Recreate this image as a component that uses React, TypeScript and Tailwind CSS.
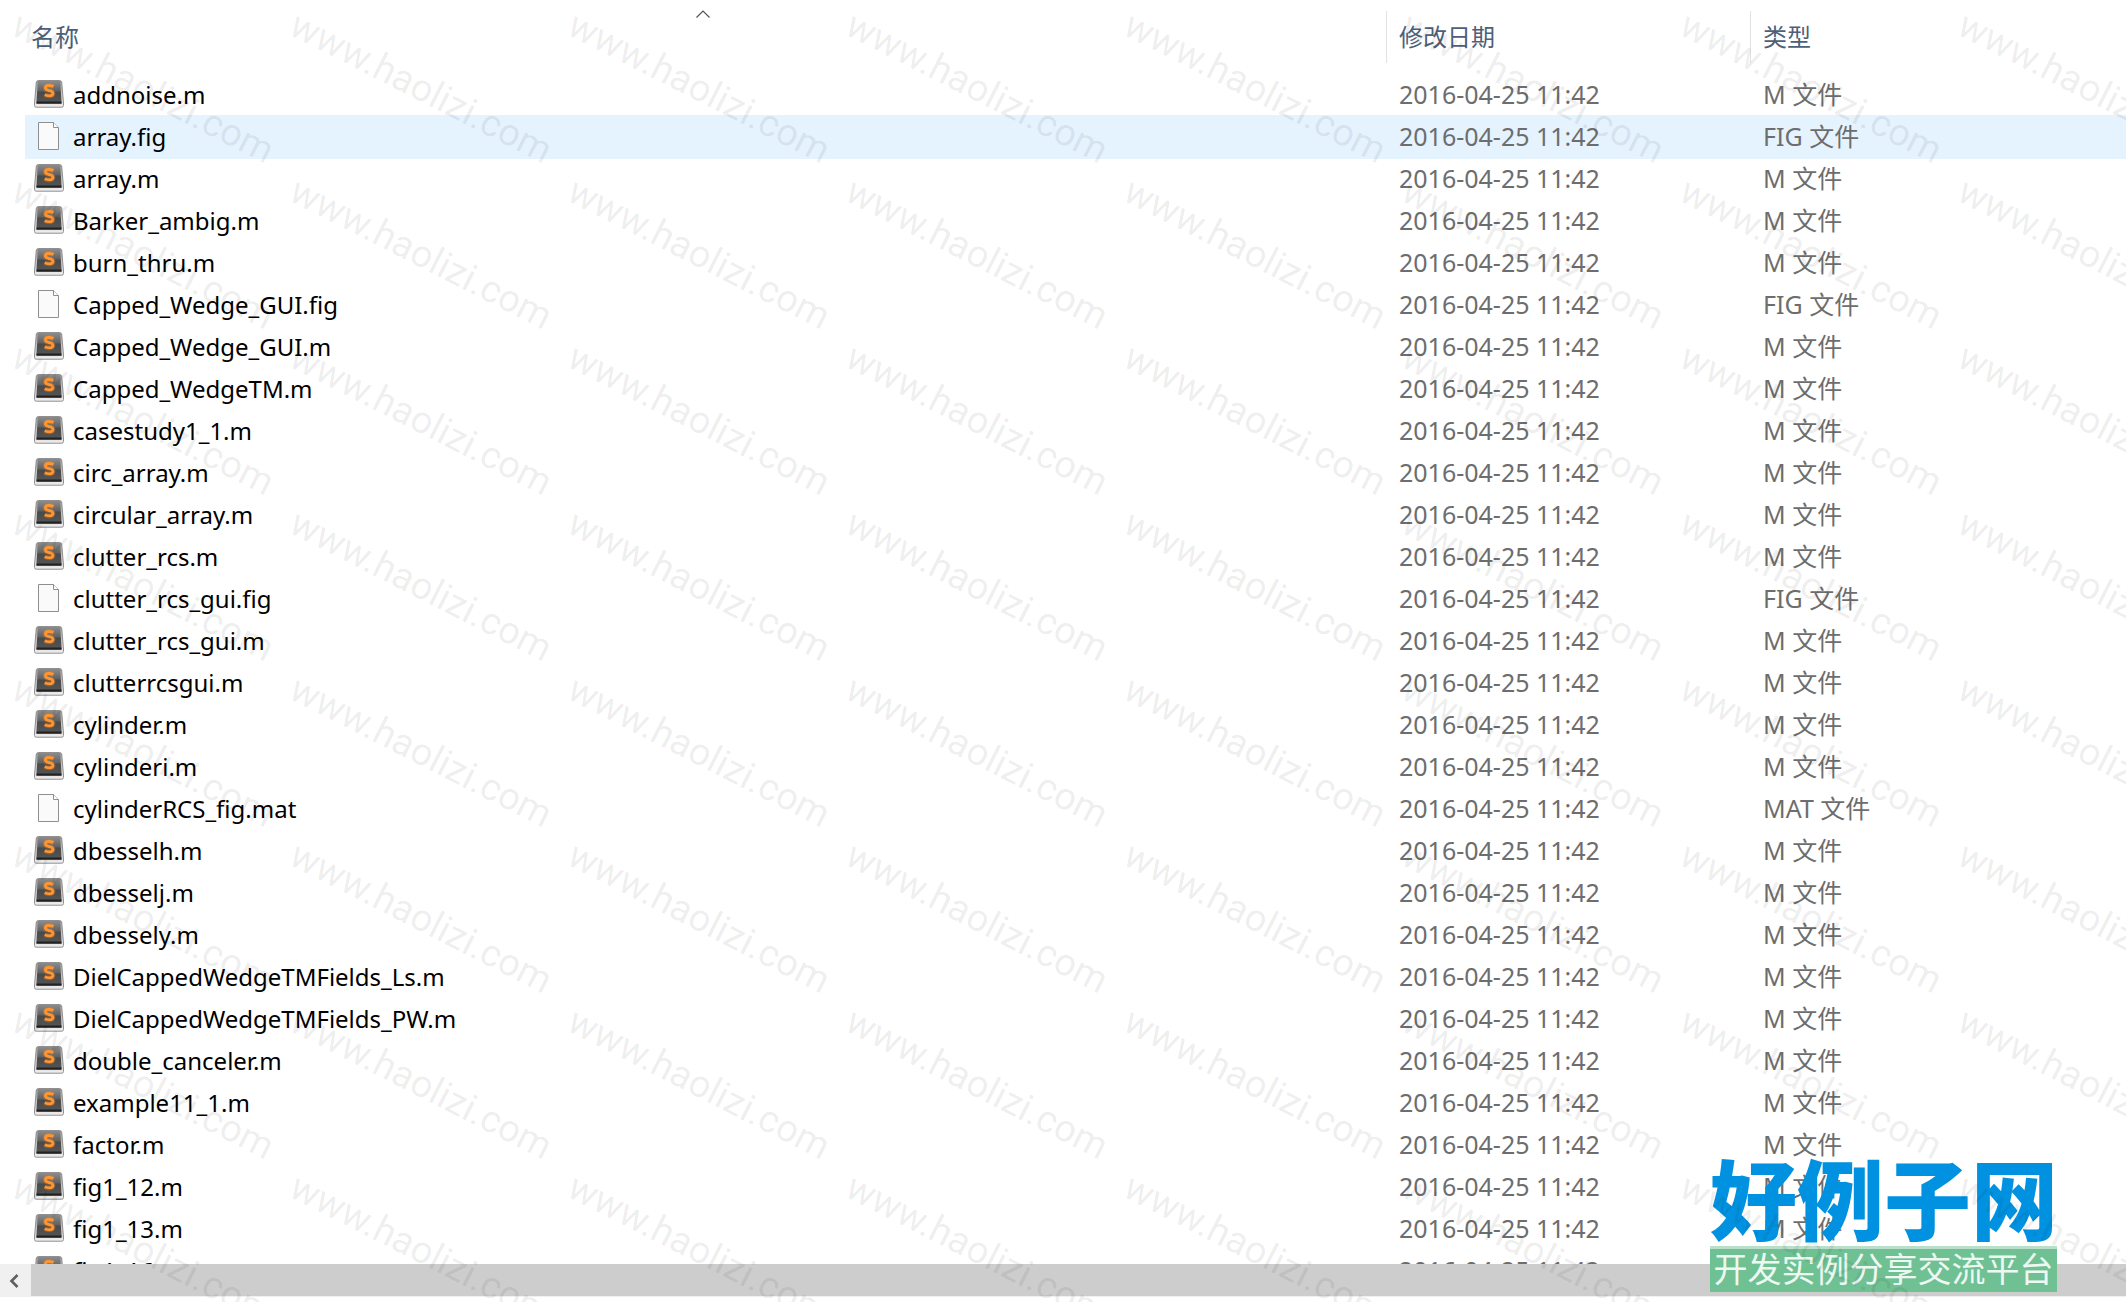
import * as React from "react";

interface FileEntry {
  name: string;
  type: string;
  selected?: boolean;
}

const MODIFIED = "2016-04-25 11:42";

const files: FileEntry[] = [
  { name: "addnoise.m", type: "M 文件" },
  { name: "array.fig", type: "FIG 文件", selected: true },
  { name: "array.m", type: "M 文件" },
  { name: "Barker_ambig.m", type: "M 文件" },
  { name: "burn_thru.m", type: "M 文件" },
  { name: "Capped_Wedge_GUI.fig", type: "FIG 文件" },
  { name: "Capped_Wedge_GUI.m", type: "M 文件" },
  { name: "Capped_WedgeTM.m", type: "M 文件" },
  { name: "casestudy1_1.m", type: "M 文件" },
  { name: "circ_array.m", type: "M 文件" },
  { name: "circular_array.m", type: "M 文件" },
  { name: "clutter_rcs.m", type: "M 文件" },
  { name: "clutter_rcs_gui.fig", type: "FIG 文件" },
  { name: "clutter_rcs_gui.m", type: "M 文件" },
  { name: "clutterrcsgui.m", type: "M 文件" },
  { name: "cylinder.m", type: "M 文件" },
  { name: "cylinderi.m", type: "M 文件" },
  { name: "cylinderRCS_fig.mat", type: "MAT 文件" },
  { name: "dbesselh.m", type: "M 文件" },
  { name: "dbesselj.m", type: "M 文件" },
  { name: "dbessely.m", type: "M 文件" },
  { name: "DielCappedWedgeTMFields_Ls.m", type: "M 文件" },
  { name: "DielCappedWedgeTMFields_PW.m", type: "M 文件" },
  { name: "double_canceler.m", type: "M 文件" },
  { name: "example11_1.m", type: "M 文件" },
  { name: "factor.m", type: "M 文件" },
  { name: "fig1_12.m", type: "M 文件" },
  { name: "fig1_13.m", type: "M 文件" },
  { name: "fig1_16.m", type: "M 文件" },
];

function SublimeIcon() {
  return (
    <svg viewBox="0 0 30 28" className="w-[30px] h-7 shrink-0" aria-hidden="true">
      <defs>
        <linearGradient id="key" x1="0" y1="0" x2="0" y2="1">
          <stop offset="0" stopColor="#8e8e8e" />
          <stop offset="0.45" stopColor="#606060" />
          <stop offset="0.5" stopColor="#4a4a4a" />
          <stop offset="1" stopColor="#555555" />
        </linearGradient>
        <linearGradient id="frame" x1="0" y1="0" x2="0" y2="1">
          <stop offset="0" stopColor="#9a9a9a" />
          <stop offset="1" stopColor="#f0f0f0" />
        </linearGradient>
      </defs>
      <path d="M4.500 .5h21q1.800 0 2.200 1.800L29.500 23v2.500q0 1.700-1.700 1.700H2.200Q.5 27.200.5 25.500V23L2.300 2.300Q2.700 .5 4.500 .5z" fill="url(#frame)" stroke="#909090" />
      <path d="M5.500 .5h19q1.500 0 1.700 1.500L27.500 21v2.500h-25V21L3.800 2Q4 .5 5.500 .5z" fill="url(#key)" />
      <path d="M2.500 21.500h25v2.200h-25z" fill="#222222" />
      <g fill="none">
        <path d="M19.500 6.500c-2-.9-3.500-1.100-4.900-1-2 .1-3.200 1.100-3.200 2.600 0 1.700 1.600 2.100 3.700 2.500 2.200.4 3.900.9 3.900 2.700 0 1.700-1.500 2.500-3.700 2.500-1.600 0-3.200-.3-4.600-1" stroke="#ff8a1f" strokeOpacity="0.25" strokeWidth="5" />
        <path d="M19.500 6.500c-2-.9-3.500-1.100-4.900-1-2 .1-3.200 1.100-3.200 2.600 0 1.700 1.600 2.100 3.700 2.500 2.200.4 3.900.9 3.900 2.700 0 1.700-1.500 2.500-3.700 2.500-1.600 0-3.200-.3-4.600-1" stroke="#ff9430" strokeWidth="2.800" />
      </g>
    </svg>
  );
}

function DocumentIcon() {
  return (
    <svg viewBox="0 0 30 30" className="w-[30px] h-[30px] shrink-0" aria-hidden="true">
      <path d="M4.500 1.500h15l5 5v22h-20z" fill="#fafafa" stroke="#8f8f8f" />
      <path d="M19.500 1.500v5h5" fill="#ffffff" stroke="#8f8f8f" />
    </svg>
  );
}

function FileRow({ file }: { file: FileEntry }) {
  const Icon = file.type === "M 文件" ? SublimeIcon : DocumentIcon;
  return (
    <tr
      className={`h-[42px] ${file.selected ? "bg-[#e5f3ff] shadow-[0_1px_0_#e5f3ff,0_-1px_0_#e5f3ff]" : ""}`}
    >
      <td className="p-0">
        <div className="flex items-center gap-[9px] pl-[9px] pb-0.5 h-[42px] text-2xl text-black">
          <Icon />
          <span className="pt-0.5">{file.name}</span>
        </div>
      </td>
      <td className="pt-0 pr-0 pb-0.5 pl-[13px]">{MODIFIED}</td>
      <td className="pt-0 pr-0 pb-0.5 pl-[13px]">{file.type}</td>
    </tr>
  );
}

function FileTable() {
  return (
    <table className="w-full table-fixed border-collapse text-left text-[25px] leading-8 text-[#6d6d6d]">
      <colgroup>
        <col />
        <col className="w-[364px]" />
        <col className="w-[376px]" />
      </colgroup>
      <thead>
        <tr className="h-[74px] text-2xl text-[#4c607a]">
          <th className="relative p-0 font-normal">
            <button className="pl-1.5">名称</button>
            {/* Sort direction */}
            <svg viewBox="0 0 14 8" className="absolute top-2.5 left-1/2 -translate-x-2.5 w-3.5 h-2" aria-hidden="true">
              <path d="M.5 7.500 7 1l6.500 6.500" fill="none" stroke="#555555" strokeWidth="1.200" />
            </svg>
          </th>
          <th className="p-0 font-normal">
            <button className="h-[52px] pl-3 border-l border-[#e2e2e2]">修改日期</button>
          </th>
          <th className="p-0 font-normal">
            <button className="h-[52px] pl-3 border-l border-[#e2e2e2]">类型</button>
          </th>
        </tr>
      </thead>
      <tbody>
        {files.map((file) => (
          <FileRow key={file.name} file={file} />
        ))}
      </tbody>
    </table>
  );
}

function HorizontalScrollbar() {
  return (
    <div className="flex h-[33px] mb-[5px] shrink-0 bg-[#f0f0f0]">
      <button aria-label="Scroll left" className="flex w-[31px] pr-1 items-center justify-center">
        <svg viewBox="0 0 10 14" className="w-2.5 h-3.5" aria-hidden="true">
          <path d="M8.500 1 2.500 7l6 6" fill="none" stroke="#606060" strokeWidth="2.600" />
        </svg>
      </button>
      <div className="h-8 flex-1 bg-[#cdcdcd]" />
    </div>
  );
}

function SiteBadge() {
  return (
    <div className="absolute right-[69px] bottom-2.5 w-[347px] text-center whitespace-nowrap">
      <div className="pb-0.5 text-[87px] leading-[88px] font-black text-[#0092e0]">好例子网</div>
      <div className="h-[46px] border-t-3 border-[#b8dfc9] bg-[#6fc193] text-[34px] leading-10 text-[#eef8f2]">
        开发实例分享交流平台
      </div>
    </div>
  );
}

function Watermark() {
  return (
    <div
      aria-hidden="true"
      className="absolute inset-0 overflow-hidden pointer-events-none select-none grid grid-cols-[repeat(12,278px)] auto-rows-[166px] font-[Roboto,sans-serif] text-[38px] leading-10 text-black/8"
    >
      {Array.from({ length: 12 * 10 }, (_, i) => (
        <div key={i} className="pl-6 pt-1">
          <div className="w-max origin-top-left rotate-27">www.haolizi.com</div>
        </div>
      ))}
    </div>
  );
}

export default function App() {
  return (
    <div className="relative flex h-screen flex-col overflow-hidden bg-white font-['Noto_Sans','Noto_Sans_CJK_SC',sans-serif]">
      <main className="min-h-0 flex-1 overflow-hidden pl-[25px]">
        <FileTable />
      </main>
      <HorizontalScrollbar />
      <SiteBadge />
      <Watermark />
    </div>
  );
}
